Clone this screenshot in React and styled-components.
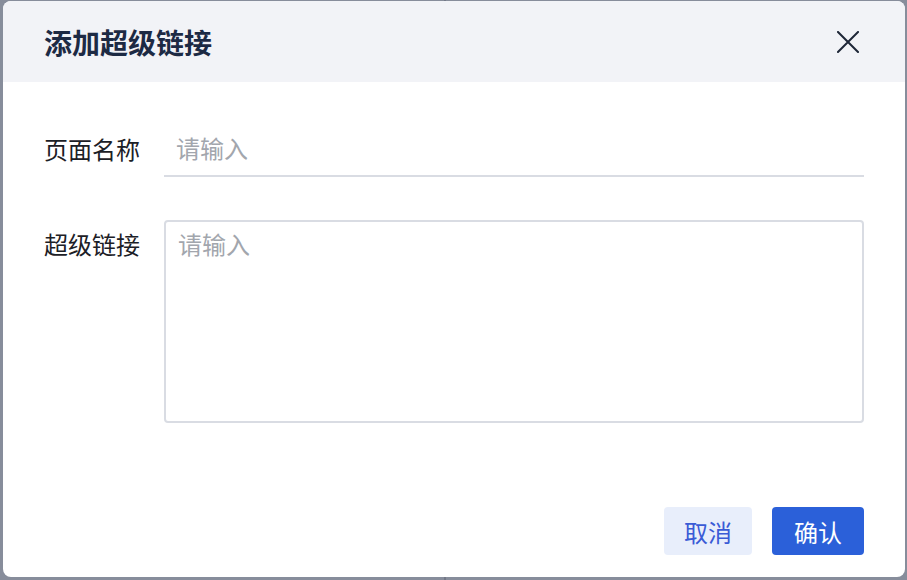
import React from "react";
import styled, { createGlobalStyle } from "styled-components";

const GlobalStyle = createGlobalStyle`
  html, body {
    margin: 0;
    padding: 0;
    height: 580px;
    overflow: hidden;
    background:
      linear-gradient(to right, transparent 444px, #737988 444px, #737988 446px, transparent 446px),
      #878d9b;
    font-family: "Noto Sans CJK SC", "Noto Sans", sans-serif;
  }
  * { box-sizing: border-box; }
`;

const Backdrop = styled.div`
  padding: 1px 2px 3px 3px;
  height: 580px;
`;

const Dialog = styled.div`
  width: 902px;
  height: 576px;
  background: #ffffff;
  border-radius: 8px;
  overflow: hidden;
  display: flex;
  flex-direction: column;
`;

const Header = styled.div`
  height: 81px;
  flex: none;
  background: #f2f3f7;
  padding: 0 41px;
  display: flex;
  align-items: center;
  justify-content: space-between;
`;

const Title = styled.h2`
  margin: 0;
  font-size: 28px;
  font-weight: 700;
  color: #1d2a44;
  letter-spacing: 0;
`;

const CloseButton = styled.button`
  width: 32px;
  height: 32px;
  padding: 0;
  border: none;
  background: transparent;
  display: flex;
  align-items: center;
  justify-content: center;
  cursor: pointer;
  color: #1f2738;
`;

const Body = styled.div`
  padding: 43px 41px 0;
  display: flex;
  flex-direction: column;
  gap: 43px;
`;

const FormRow = styled.div`
  display: grid;
  grid-template-columns: 120px 1fr;
  align-items: ${(p) => (p.$top ? "start" : "center")};
`;

const Label = styled.label`
  font-size: 24px;
  line-height: 34px;
  color: #1c2026;
  padding-top: ${(p) => (p.$top ? "7px" : "0")};
  padding-bottom: ${(p) => (p.$top ? "0" : "5px")};
`;

const TextInput = styled.input`
  height: 52px;
  border: none;
  border-bottom: 2px solid #d9dce3;
  outline: none;
  padding: 0 12px 5px;
  font-family: inherit;
  font-size: 24px;
  color: #1c2026;
  background: transparent;
  &::placeholder {
    color: #a2a6ad;
  }
`;

const TextArea = styled.textarea`
  height: 203px;
  border: 2px solid #d9dce3;
  border-radius: 4px;
  outline: none;
  resize: none;
  padding: 5px 12px;
  font-family: inherit;
  font-size: 24px;
  line-height: 1.4;
  color: #1c2026;
  &::placeholder {
    color: #a2a6ad;
  }
`;

const Footer = styled.div`
  margin-top: auto;
  padding: 0 41px 22px;
  display: flex;
  justify-content: flex-end;
  gap: 20px;
`;

const Button = styled.button`
  height: 48px;
  padding: ${(p) => (p.$primary ? "0 22px" : "0 20px")};
  border: none;
  border-radius: 4px;
  font-family: inherit;
  font-size: 24px;
  cursor: pointer;
  background: ${(p) => (p.$primary ? "#2b60d9" : "#e8eefb")};
  color: ${(p) => (p.$primary ? "#ffffff" : "#3a5bd6")};
`;

const CloseIcon = () => (
  <svg width="22" height="22" viewBox="0 0 22 22" fill="none">
    <path d="M1 1L21 21M21 1L1 21" stroke="currentColor" strokeWidth="2" strokeLinecap="square" />
  </svg>
);

export default function App() {
  return (
    <>
      <GlobalStyle />
      <Backdrop>
        <Dialog>
          <Header>
            <Title>添加超级链接</Title>
            <CloseButton aria-label="关闭">
              <CloseIcon />
            </CloseButton>
          </Header>
          <Body>
            <FormRow>
              <Label>页面名称</Label>
              <TextInput placeholder="请输入" />
            </FormRow>
            <FormRow $top>
              <Label $top>超级链接</Label>
              <TextArea placeholder="请输入" />
            </FormRow>
          </Body>
          <Footer>
            <Button>取消</Button>
            <Button $primary>确认</Button>
          </Footer>
        </Dialog>
      </Backdrop>
    </>
  );
}
